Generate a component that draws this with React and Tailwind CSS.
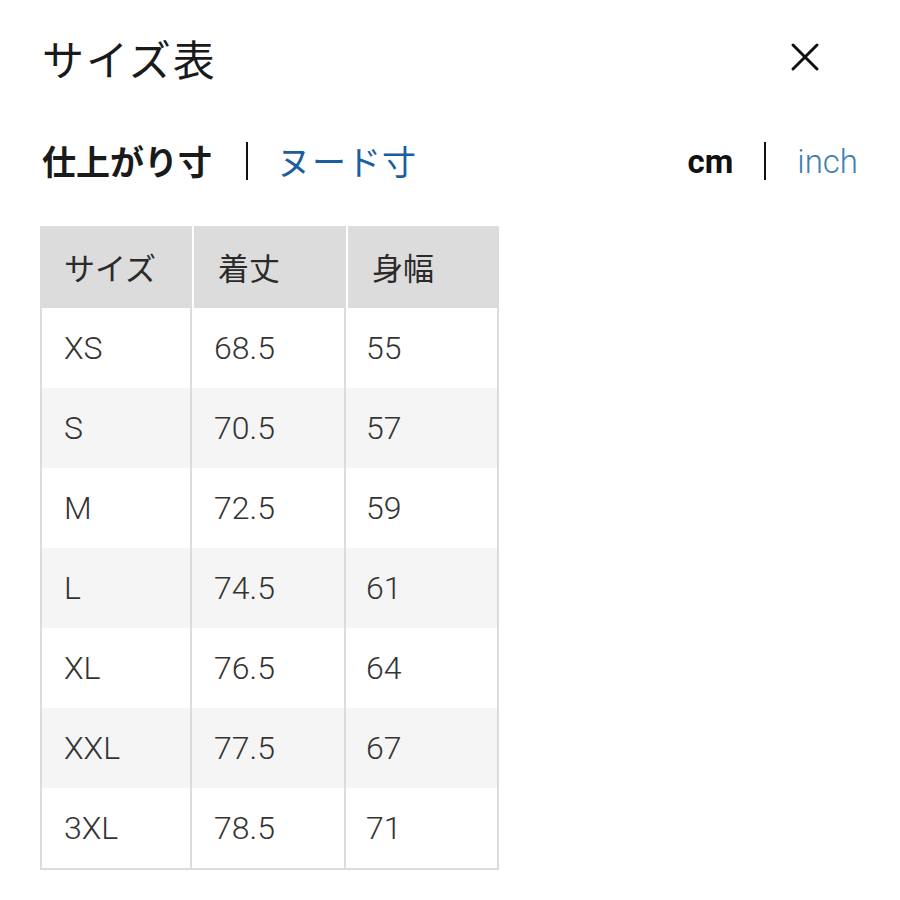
import React from "react";

const rows = [
  ["XS", "68.5", "55"],
  ["S", "70.5", "57"],
  ["M", "72.5", "59"],
  ["L", "74.5", "61"],
  ["XL", "76.5", "64"],
  ["XXL", "77.5", "67"],
  ["3XL", "78.5", "71"],
];

export default function App() {
  return (
    <div
      className="w-[900px] h-[900px] bg-white text-[#222] pl-[42px] pr-[42px]"
      style={{ fontFamily: 'Roboto, "Noto Sans CJK JP", sans-serif' }}
    >
      <div className="flex items-center justify-between h-[116px]">
        <div className="text-[42px] leading-none tracking-[2px] text-[#1a1a1a]" style={{ fontFamily: '"Noto Sans CJK JP", sans-serif' }}>
          サイズ表
        </div>
        <svg width="30" height="30" viewBox="0 0 30 30" className="mr-[38px] -mt-[2px]">
          <path d="M3 3 L27 27 M27 3 L3 27" stroke="#111" strokeWidth="3" strokeLinecap="round" />
        </svg>
      </div>

      <div className="flex items-center justify-between h-[90px]">
        <div className="flex items-center" style={{ fontFamily: '"Noto Sans CJK JP", sans-serif' }}>
          <span className="text-[34px] font-bold leading-none text-[#1a1a1a]">仕上がり寸</span>
          <span className="w-[2px] h-[38px] bg-[#111] ml-[34px] mr-[29px]"></span>
          <span className="text-[34px] leading-none text-[#1b5e9e] tracking-[1px]">ヌード寸</span>
        </div>
        <div className="flex items-center">
          <span className="text-[33px] font-bold leading-none text-[#111]">cm</span>
          <span className="w-[2px] h-[38px] bg-[#111] mx-[31px]"></span>
          <span className="text-[33px] font-light leading-none text-[#3f7fb0]">inch</span>
        </div>
      </div>

      <div className="w-[459px] -ml-[2px] mt-[20px] text-[#333]">
        <div className="grid grid-cols-[152px_152px_151px] gap-[2px] bg-white">
          {["サイズ", "着丈", "身幅"].map((h) => (
            <div
              key={h}
              className="h-[82px] bg-[#dcdcdc] flex items-center pl-[24px] text-[31px] text-[#2a2a2a]"
              style={{ fontFamily: '"Noto Sans CJK JP", sans-serif' }}
            >
              {h}
            </div>
          ))}
        </div>
        <div className="border-x-2 border-b-2 border-[#dcdcdc]">
          {rows.map((r, i) => (
            <div
              key={r[0]}
              className={
                "grid grid-cols-[150px_154px_151px] h-[80px] font-light " +
                (i % 2 === 1 ? "bg-[#f5f5f5]" : "bg-white")
              }
            >
              <div className="flex items-center pl-[22px] text-[32px] border-r-2 border-[#dcdcdc]">{r[0]}</div>
              <div className="flex items-center pl-[22px] text-[32px] border-r-2 border-[#dcdcdc]">{r[1]}</div>
              <div className="flex items-center pl-[20px] text-[32px]">{r[2]}</div>
            </div>
          ))}
        </div>
      </div>
    </div>
  );
}
